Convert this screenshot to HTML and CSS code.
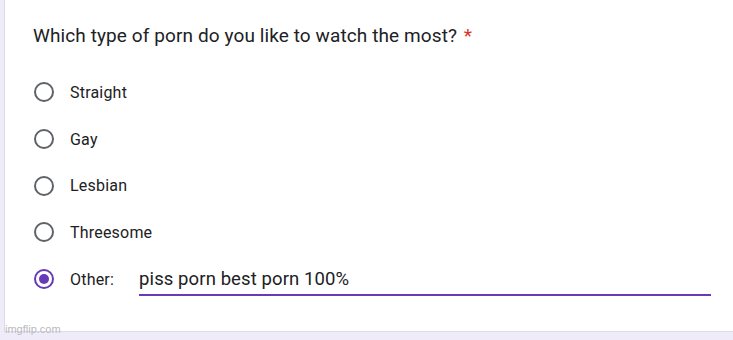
FILE: index.html
```html
<!DOCTYPE html>
<html>
<head>
<meta charset="utf-8">
<link rel="stylesheet" href="styles.css">
</head>
<body>
<div class="page">
  <div class="card">
    <div class="question">Which type of porn do you like to watch the most? <span class="req">*</span></div>
    <div class="options">
      <div class="opt"><span class="radio"></span><span class="label">Straight</span></div>
      <div class="opt"><span class="radio"></span><span class="label">Gay</span></div>
      <div class="opt"><span class="radio"></span><span class="label">Lesbian</span></div>
      <div class="opt"><span class="radio"></span><span class="label">Threesome</span></div>
      <div class="opt other"><span class="radio checked"></span><span class="label">Other:</span><span class="input">piss porn best porn 100%</span></div>
    </div>
  </div>
  <div class="watermark">imgflip.com</div>
</div>
</body>
</html>
```
FILE: styles.css
```css
* { box-sizing: border-box; }
html, body { margin: 0; padding: 0; }
body {
  width: 733px;
  height: 340px;
  background: #f0ebf8;
  font-family: Roboto, "Liberation Sans", sans-serif;
  color: #202124;
  overflow: hidden;
}
.page { position: relative; height: 340px; padding-left: 4px; }
.card {
  background: #fff;
  border-left: 1px solid #dadce0;
  border-bottom: 1px solid #dadce0;
  height: 332px;
  padding: 22px 0 0 28px;
}
.question {
  font-size: 19px;
  line-height: 28px;
  letter-spacing: 0.1px;
}
.req { color: #d93025; margin-left: 2px; }
.options {
  display: flex;
  flex-direction: column;
  margin-top: 19px;
}
.opt {
  display: flex;
  align-items: center;
  height: 46.7px;
}
.radio {
  width: 20px;
  height: 20px;
  border: 2px solid #5f6368;
  border-radius: 50%;
  margin-left: 1px;
  margin-right: 16px;
  display: flex;
  align-items: center;
  justify-content: center;
}
.radio.checked { border-color: #673ab7; }
.radio.checked::after {
  content: "";
  width: 10px;
  height: 10px;
  border-radius: 50%;
  background: #673ab7;
}
.label { font-size: 16px; letter-spacing: 0.2px; }
.input {
  margin-left: 25px;
  width: 572px;
  font-size: 18.5px;
  letter-spacing: 0.1px;
  padding-bottom: 4px;
  border-bottom: 2px solid #673ab7;
  margin-top: 5px;
}
.watermark {
  position: absolute;
  left: 5px;
  top: 323px;
  font-size: 11px;
  color: #b9b9c0;
  font-family: "Liberation Sans", Arial, sans-serif;
}
```
